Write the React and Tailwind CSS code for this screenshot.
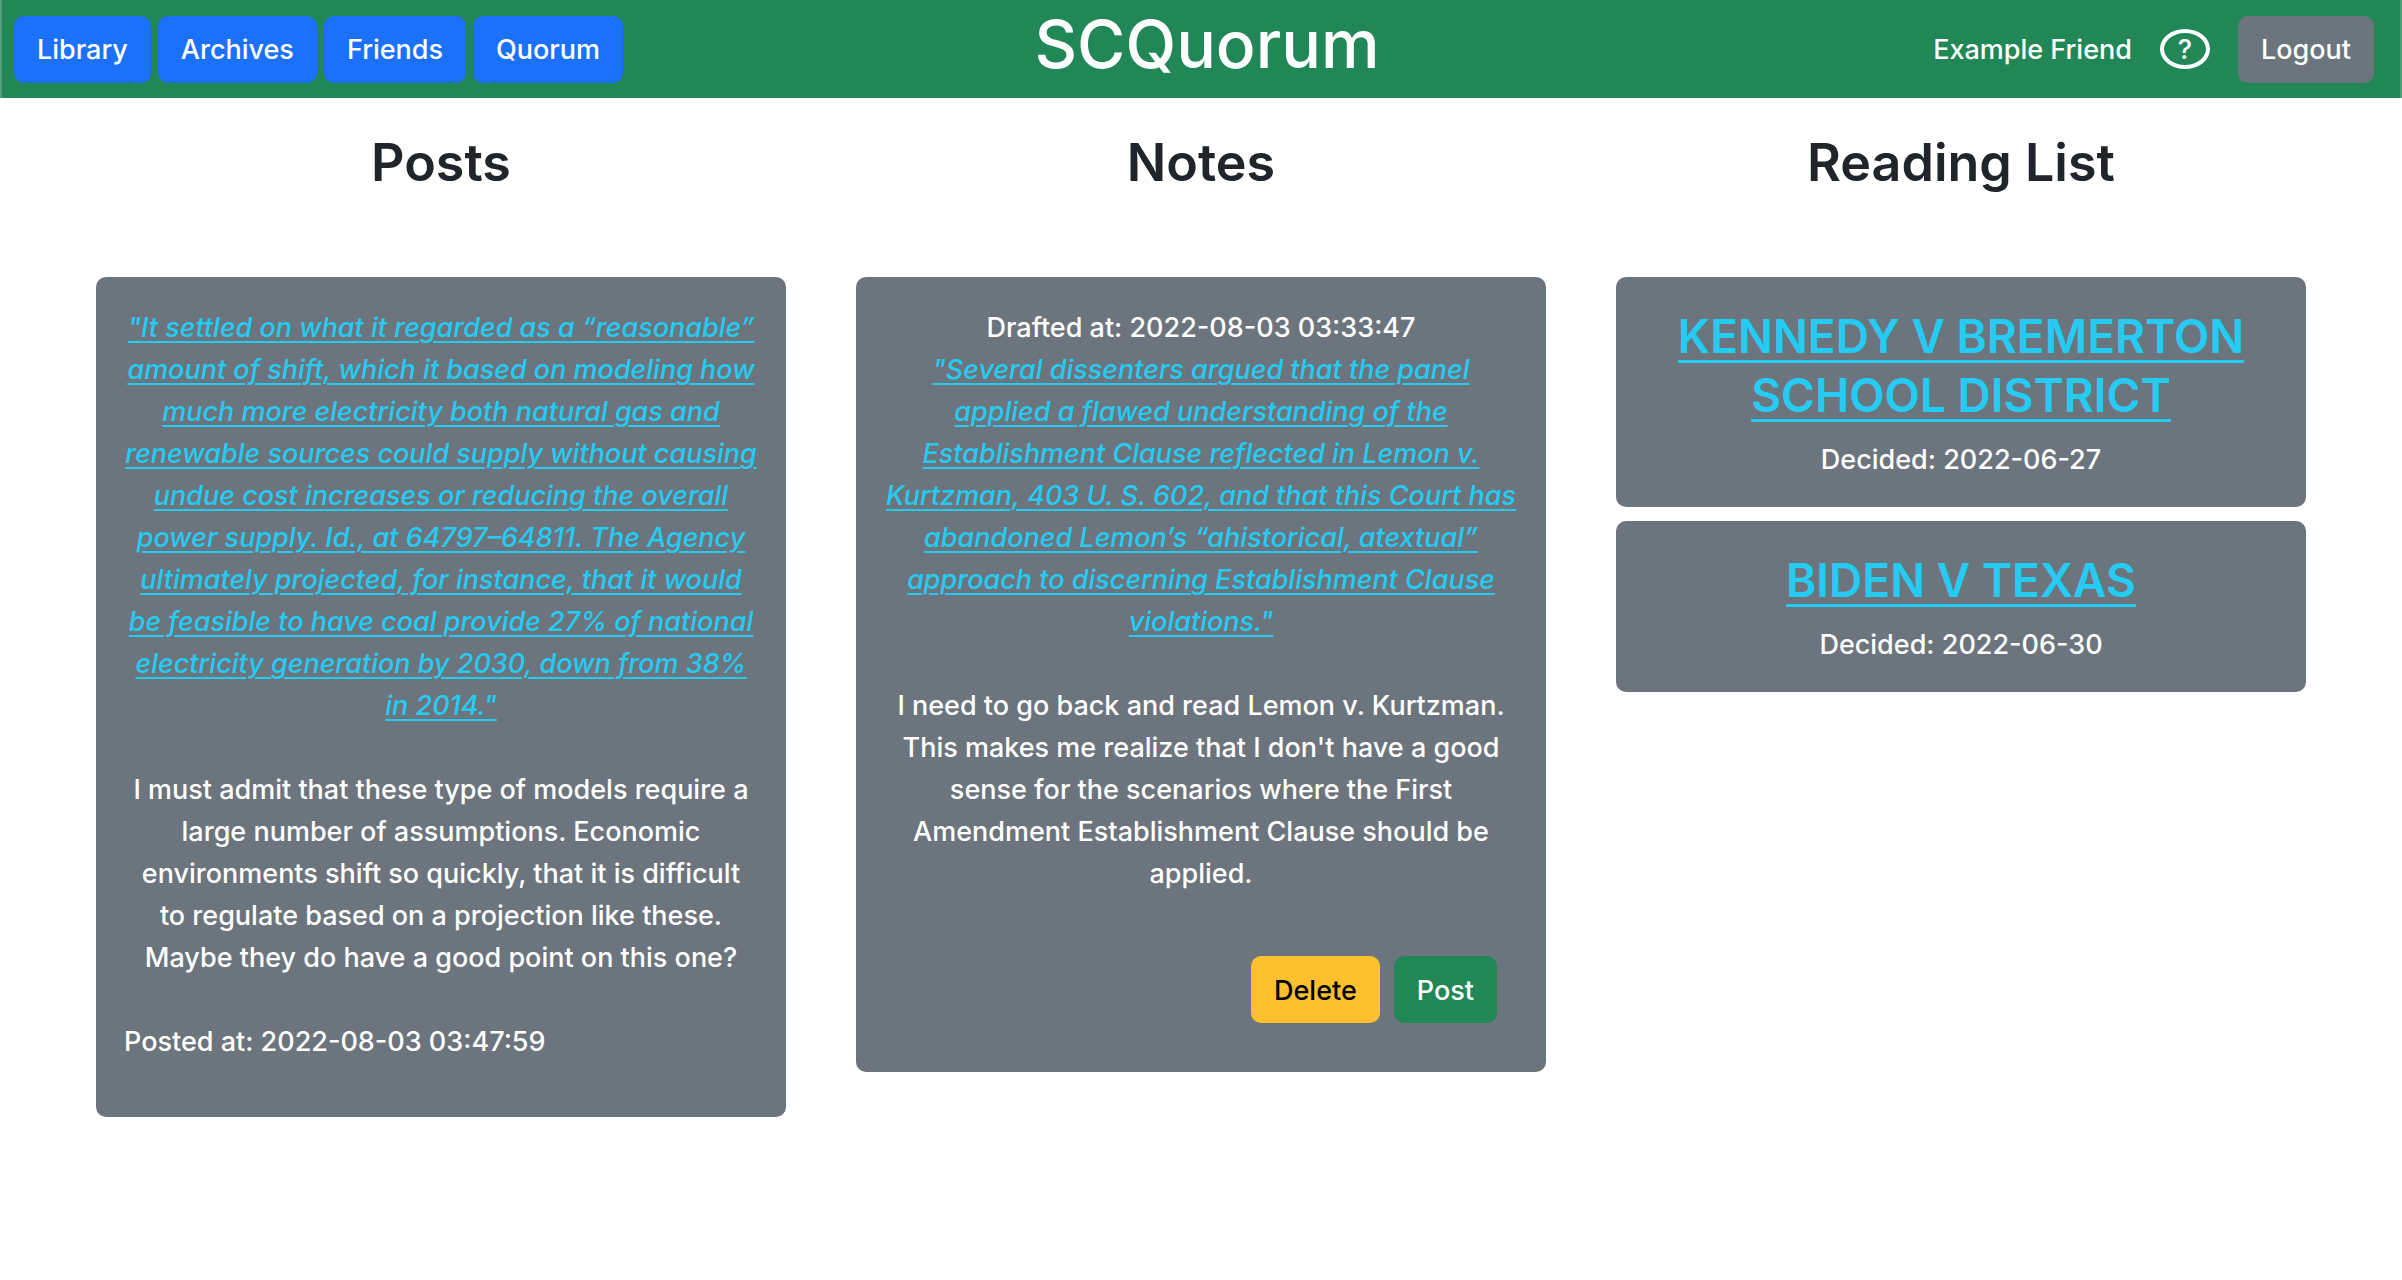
const NAV = ["Library", "Archives", "Friends", "Quorum"];

const CASES = [
  { title: "KENNEDY V BREMERTON SCHOOL DISTRICT", decided: "2022-06-27" },
  { title: "BIDEN V TEXAS", decided: "2022-06-30" },
];

const POST_QUOTE = [
  '"It settled on what it regarded as a “reasonable”',
  "amount of shift, which it based on modeling how",
  "much more electricity both natural gas and",
  "renewable sources could supply without causing",
  "undue cost increases or reducing the overall",
  "power supply. Id., at 64797–64811. The Agency",
  "ultimately projected, for instance, that it would",
  "be feasible to have coal provide 27% of national",
  "electricity generation by 2030, down from 38%",
  'in 2014."',
].join("\n");

const NOTE_QUOTE = [
  '"Several dissenters argued that the panel',
  "applied a flawed understanding of the",
  "Establishment Clause reflected in Lemon v.",
  "Kurtzman, 403 U. S. 602, and that this Court has",
  "abandoned Lemon’s “ahistorical, atextual”",
  "approach to discerning Establishment Clause",
  'violations."',
].join("\n");

function Button({ tone, children }) {
  return (
    <button type="button" className={`h-[67px] rounded-[10px] px-[23px] pt-[2px] ${tone}`}>
      {children}
    </button>
  );
}

function Column({ title, children }) {
  return (
    <section className="flex flex-col">
      <h2 className="mb-[80px] text-center text-[52px] leading-[68px] font-semibold text-[#212529]">
        {title}
      </h2>
      <div className="flex flex-col gap-[14px]">{children}</div>
    </section>
  );
}

function Card({ children }) {
  return (
    <article className="rounded-[10px] bg-[#6c757d] px-[24px] pt-[30px] pb-[26px] text-center text-white">
      {children}
    </article>
  );
}

function Quote({ text }) {
  return (
    <a
      href="#"
      className="block whitespace-pre-line text-[#25cbf2] italic underline decoration-2 underline-offset-4"
    >
      {text}
    </a>
  );
}

export default function App() {
  return (
    <div className="min-h-screen bg-white font-['Inter',sans-serif] text-[27px] leading-[42px] font-medium">
      <header className="grid grid-cols-[1fr_auto_1fr] items-center border-x-2 border-[#4d9f79] bg-[#218756] pl-[12px] text-white">
        <nav className="flex gap-[7px]">
          {NAV.map((n) => (
            <Button key={n} tone="bg-[#1c71fa] text-white">
              {n}
            </Button>
          ))}
        </nav>
        <h1 className="pt-[2px] pb-[12px] text-[66px] leading-[84px] font-medium">SCQuorum</h1>
        <div className="flex items-center justify-end gap-[28px] pr-[26px]">
          <span className="pt-[2px]">Example Friend</span>
          <button
            type="button"
            aria-label="Help"
            className="flex h-[40px] w-[50px] items-center justify-center rounded-[50%] border-4 border-white leading-none"
          >
            ?
          </button>
          <Button tone="bg-[#6c757d] text-white">Logout</Button>
        </div>
      </header>

      <main className="grid grid-cols-3 gap-[70px] px-[96px] pt-[31px]">
        <Column title="Posts">
          <Card>
            <Quote text={POST_QUOTE} />
            <p className="mt-[42px] px-2">
              I must admit that these type of models require a large number of assumptions. Economic
              environments shift so quickly, that it is difficult to regulate based on a projection
              like these. Maybe they do have a good point on this one?
            </p>
            <p className="mt-[42px] mb-[28px] px-1 text-left">Posted at: 2022-08-03 03:47:59</p>
          </Card>
        </Column>

        <Column title="Notes">
          <Card>
            <p>Drafted at: 2022-08-03 03:33:47</p>
            <Quote text={NOTE_QUOTE} />
            <p className="mt-[42px] px-2">
              I need to go back and read Lemon v. Kurtzman. This makes me realize that I don't have
              a good sense for the scenarios where the First Amendment Establishment Clause should be
              applied.
            </p>
            <div className="mt-[61px] mb-[23px] flex justify-end gap-[14px] pr-[25px]">
              <Button tone="bg-[#fcc02f] text-black">Delete</Button>
              <Button tone="bg-[#218756] text-white">Post</Button>
            </div>
          </Card>
        </Column>

        <Column title="Reading List">
          {CASES.map((c) => (
            <Card key={c.title}>
              <h3 className="mb-[14px] text-[46px] leading-[59px] font-semibold">
                <a
                  href="#"
                  className="text-[#25cbf2] underline decoration-[3px] underline-offset-[7px]"
                >
                  {c.title}
                </a>
              </h3>
              <p>Decided: {c.decided}</p>
            </Card>
          ))}
        </Column>
      </main>
    </div>
  );
}
